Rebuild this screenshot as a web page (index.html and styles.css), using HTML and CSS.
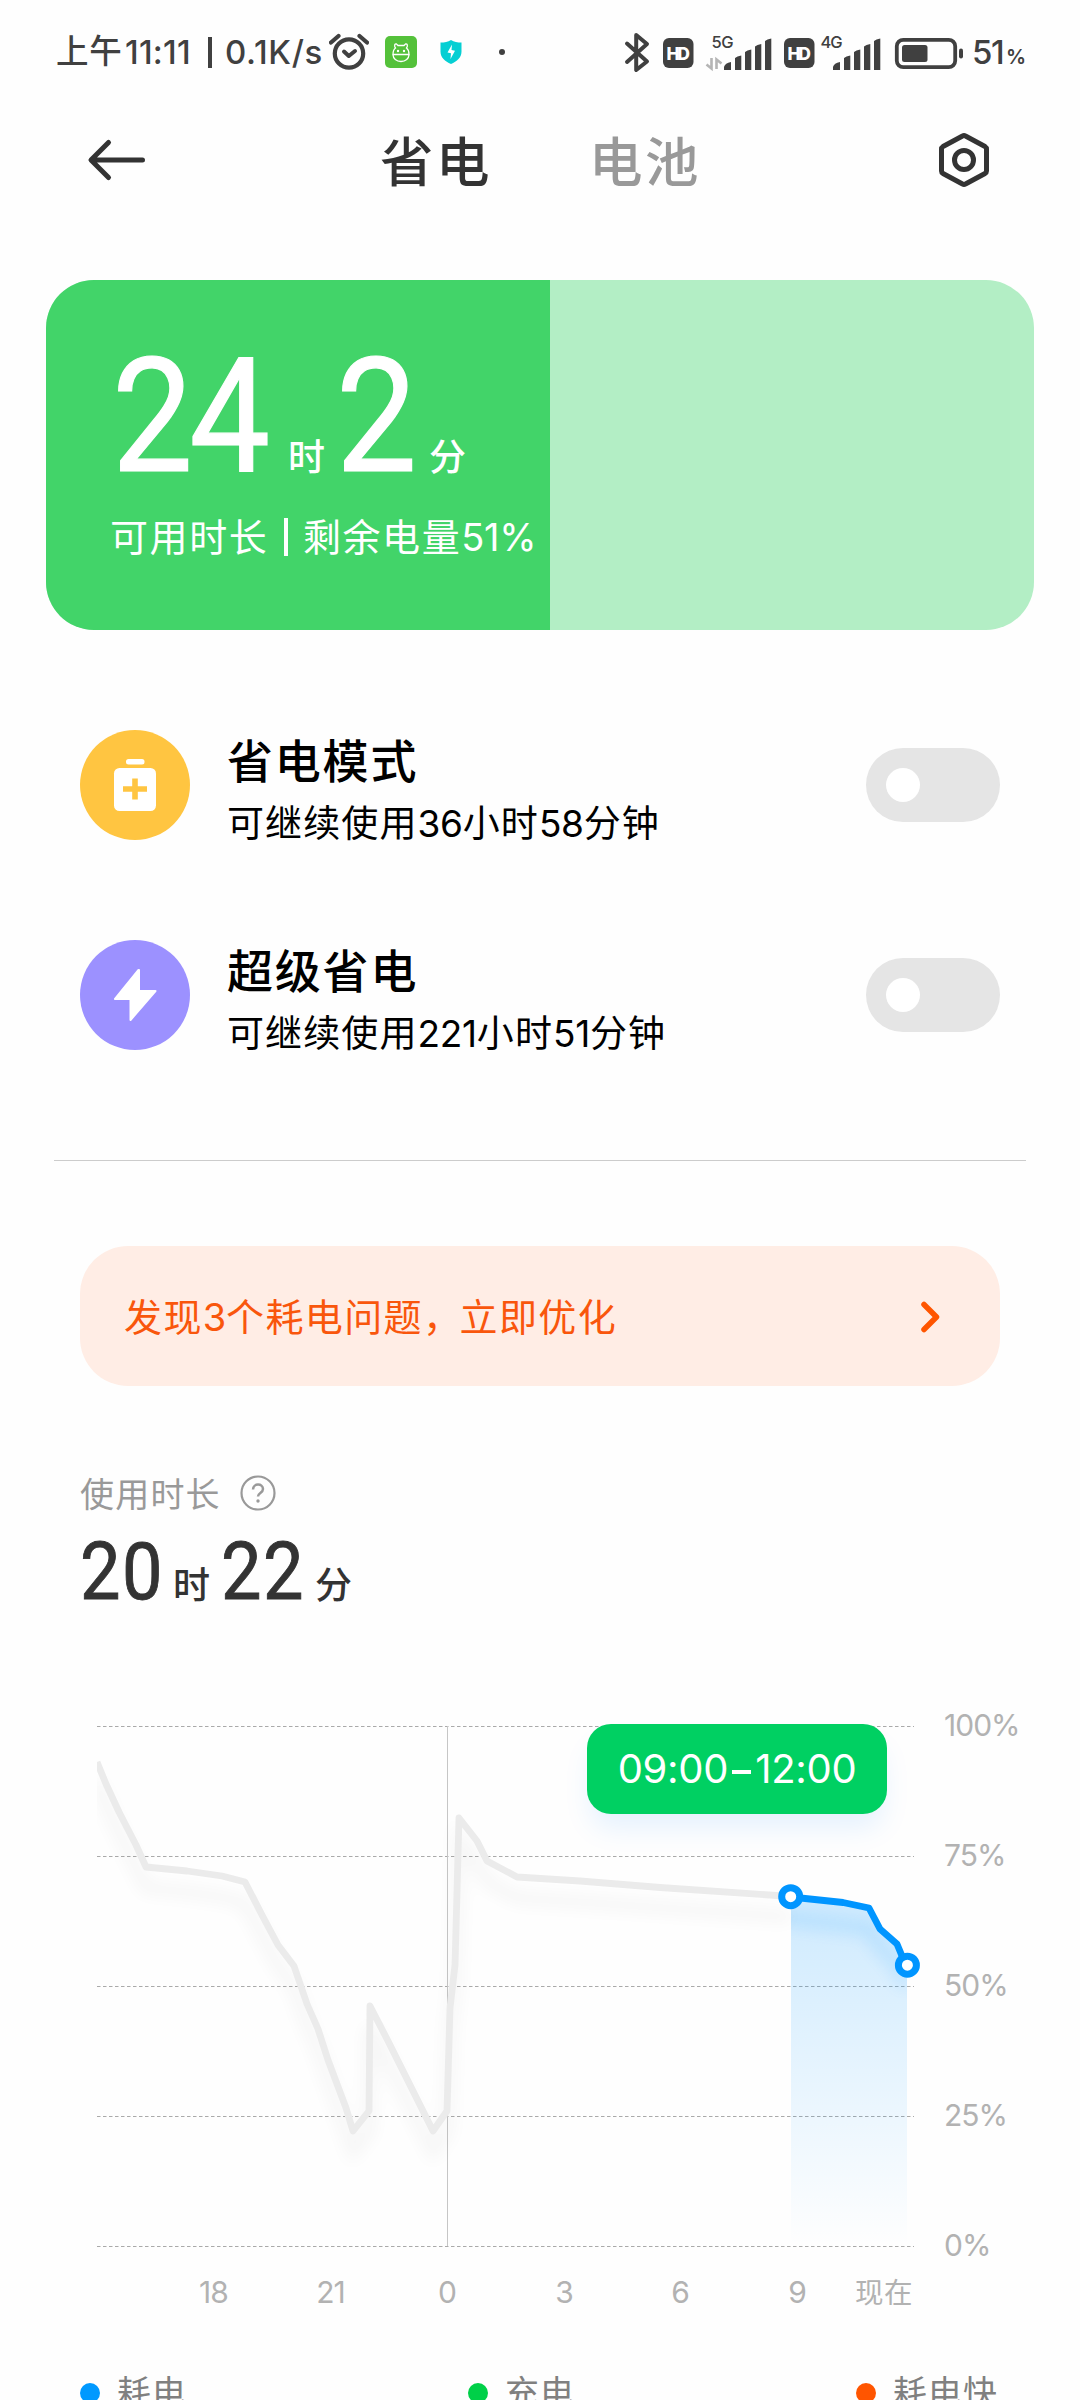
FILE: index.html
```html
<!DOCTYPE html>
<html lang="zh-CN">
<head>
<meta charset="utf-8">
<title>省电</title>
<link rel="stylesheet" href="styles.css">
</head>
<body>
<div class="status">
  <span class="s-ampm">上午</span><span class="s-clock">11:11</span><span class="s-bar"></span><span class="s-speed">0.1K/s</span>
  <svg class="s-alarm" width="40" height="40" viewBox="0 0 40 40" fill="none" stroke="#404040"><circle cx="20" cy="21.500" r="14.200" stroke-width="4.200"/><path d="M2 10.500 9.500 4M38 10.500 30.500 4" stroke-width="4.200" stroke-linecap="round"/><path d="M15 19.500 19.800 24 26 19" stroke-width="4" stroke-linecap="round" stroke-linejoin="round"/></svg>
  <svg class="s-app" width="32" height="32" viewBox="0 0 32 32"><rect width="32" height="32" rx="5" fill="#54c13a"/><g fill="none" stroke="#fff" stroke-width="1.300"><path d="M8 18.500C8 15 8.500 13.500 10.500 12 9 10 9.500 7.500 11.500 8L13 9.500h6L20.500 8c2-.5 2.500 2 1 4 2 1.500 2.500 3 2.500 6.500z"/><path d="M8 18.500c0 4 3.500 7 8 7s8-3 8-7"/></g><circle cx="13" cy="15" r="1.200" fill="#fff"/><circle cx="19" cy="15" r="1.200" fill="#fff"/></svg>
  <svg class="s-shield" width="24" height="26" viewBox="0 0 24 26"><path d="M12 1c3 2 6.500 2.500 10.500 2.500v9c0 6-4.500 10-10.500 12.500C6 22.500 1.500 18.500 1.500 12.500v-9C5.500 3.500 9 3 12 1z" fill="#06cfd3"/><path d="M13 5.500 8.500 13.500l3.500.8-.5 5.700 4.500-8.300-3.500-.7z" fill="#fff"/></svg>
  <span class="s-dot"></span>
  <svg class="s-right" width="342" height="44" viewBox="622 30 342 44">
    <path d="M628 43.500 648 61.500 637.200 70V35L648 44 628 62" fill="none" stroke="#404040" stroke-width="4" stroke-linecap="round" stroke-linejoin="round"/>
    <g fill="#404040"><rect x="664" y="38" width="30.500" height="30" rx="6"/><rect x="785" y="38" width="30.500" height="30" rx="6"/></g>
    <g class="hd"><text x="667.500" y="59.500" textLength="23.500">HD</text><text x="788.500" y="59.500" textLength="23.500">HD</text></g>
    <g class="net"><text x="712.500" y="48" textLength="22">5G</text><text x="821.500" y="48" textLength="22">4G</text></g>
    <g fill="none" stroke="#b5b5b5" stroke-width="2.600"><path d="M712.500 58v10.500l-5-4"/><path d="M717.500 69V59.500l5 4"/></g>
    <g fill="#404040" id="bars"><path d="M725 70v-3q1-4 7-5v8zM736 70V58q2-2 6.300-2.500V70zM746 70V52q2-2 6.300-2.500V70zM756 70V46.500q2-2 6.300-2.500V70zM766 70V41q2-2 6.300-2.500V70z"/></g>
    <use href="#bars" x="109"/>
    <rect x="897.800" y="39.800" width="58.400" height="27.400" rx="6.500" fill="none" stroke="#404040" stroke-width="3.800"/>
    <rect x="903" y="45" width="25.500" height="17" rx="2.500" fill="#404040"/><rect x="960" y="48.500" width="4" height="10" rx="2" fill="#404040"/>
  </svg>
  <span class="s-batt">51</span><span class="s-pct">%</span>
</div>

<header class="header">
  <svg class="back" width="60" height="44" viewBox="0 0 60 44" fill="none" stroke="#333" stroke-width="5" stroke-linecap="round" stroke-linejoin="round"><path d="M23.500 4.500 6 22 23.500 39.500M6.500 22H57.500"/></svg>
  <span class="tab on">省电</span><span class="tab">电池</span>
  <svg class="gear" width="52" height="56" viewBox="0 0 52 56" fill="none" stroke="#333" stroke-width="5" stroke-linejoin="round"><path d="M24.500 4 Q26 3 27.500 4L47 14.500Q48.500 15.500 48.500 17V39Q48.500 40.500 47 41.500L27.500 52Q26 53 24.500 52L5 41.500Q3.500 40.500 3.500 39V17Q3.500 15.500 5 14.500Z"/><circle cx="26" cy="28" r="9.500"/></svg>
</header>

<section class="card">
  <div class="card-fill" style="width:51%">
    <div class="time big"><span class="n n1">24</span><span class="u">时</span><span class="n n2">2</span><span class="u">分</span></div>
    <div class="card-sub">可用时长<i class="sep"></i>剩余电量<span class="num">51%</span></div>
  </div>
</section>

<section class="modes">
  <div class="mode">
    <svg width="110" height="110" viewBox="0 0 110 110"><circle cx="55" cy="55" r="55" fill="#ffc541"/><rect x="46" y="29" width="18.500" height="5.500" rx="2.500" fill="#fff"/><rect x="34" y="38" width="42" height="43" rx="5.500" fill="#fff"/><path d="M43 59h24M55 48.500v21" stroke="#ffc541" stroke-width="5.600"/></svg>
    <div class="mode-text"><h2>省电模式</h2><p>可继续使用<span class="num">36</span>小时<span class="num">58</span>分钟</p></div>
    <span class="toggle"><i></i></span>
  </div>
  <div class="mode">
    <svg width="110" height="110" viewBox="0 0 110 110"><circle cx="55" cy="55" r="55" fill="#9c91ff"/><path d="M58.500 30 35 59h15.500v21L75.500 51H59V30z" fill="#fff" stroke="#fff" stroke-width="2" stroke-linejoin="round"/></svg>
    <div class="mode-text"><h2>超级省电</h2><p>可继续使用<span class="num">221</span>小时<span class="num">51</span>分钟</p></div>
    <span class="toggle"><i></i></span>
  </div>
</section>

<section class="banner"><span>发现<span class="num">3</span>个耗电问题<span class="comma">，</span>立即优化</span>
  <svg width="24" height="34" viewBox="0 0 24 34" fill="none" stroke="#ff5500" stroke-width="5.500" stroke-linecap="round" stroke-linejoin="round"><path d="M6 4.500 18.500 17 6 29.500"/></svg>
</section>

<section class="usage">
  <div class="usage-label">使用时长
    <svg width="36" height="36" viewBox="0 0 36 36"><circle cx="18" cy="18" r="16.500" fill="none" stroke="#999" stroke-width="2.200"/><path d="M13 14.500c0-6.500 10-6.500 10-.5 0 4-5 4-5 7.500" fill="none" stroke="#999" stroke-width="2.500"/><circle cx="18" cy="26" r="1.700" fill="#999"/></svg>
  </div>
  <div class="time small"><span class="n n1">20</span><span class="u">时</span><span class="n n2">22</span><span class="u">分</span></div>
</section>

<section class="chart">
  <svg width="1000" height="640" viewBox="80 1690 1000 640">
    <defs>
      <linearGradient id="area" x1="0" y1="1897" x2="0" y2="2246" gradientUnits="userSpaceOnUse"><stop offset="0" stop-color="#0095ff" stop-opacity=".19"/><stop offset="1" stop-color="#0095ff" stop-opacity="0"/></linearGradient>
      <filter id="soft" x="0" y="1690" width="1080" height="600" filterUnits="userSpaceOnUse"><feGaussianBlur stdDeviation="8"/></filter>
      <clipPath id="plot"><rect x="97" y="1700" width="840" height="560"/></clipPath>
      <clipPath id="sel"><path d="M791 1897 869 1908 880 1929 897 1944 907 1965V2246H791Z"/></clipPath>
    </defs>
    <path class="grid" d="M97 1726.500H914M97 1856.500H914M97 1986.500H914M97 2116.500H914M97 2246.500H914"/>
    <path d="M447.500 1726V2246" stroke="#c6c6c6"/>
    <path d="M791 1897 843 1902.500 869 1908 880 1929 897 1944 902 1956 907 1965V2246H791Z" fill="url(#area)"/>
    <g clip-path="url(#plot)">
      <path transform="translate(0 21)" filter="url(#soft)" opacity=".032" fill="none" stroke="#000" stroke-width="13" d="M96 1760 106 1784 119 1812 146 1867 187 1871 222 1876 245 1882 278 1945 294 1966 307 2004 318 2029 353 2131 369 2111 370 2006 411 2087 433 2131 447 2111 450 2008 455 1965 459 1818 477 1841 487 1861 517 1877 580 1881 791 1896"/>
      <path fill="none" stroke="#ebebeb" stroke-width="6.800" stroke-linejoin="round" d="M97 1762 106 1784 119 1812 136 1845 146 1867 187 1871 222 1876 245 1882 262 1915 278 1945 294 1966 307 2004 318 2029 328 2060 346 2108 353 2131 369 2111 370 2006 388 2041 411 2087 433 2131 447 2111 450 2008 455 1965 459 1818 477 1841 487 1861 517 1877 580 1881 660 1887.500 791 1896.500"/>
    </g>
    <path clip-path="url(#sel)" filter="url(#soft)" opacity=".13" fill="none" stroke="#0095ff" stroke-width="14" d="M780 1917 869 1928 880 1946 897 1964 907 1985"/>
    <path fill="none" stroke="#0095ff" stroke-width="6.800" stroke-linejoin="round" d="M791 1897 843 1902.500 869 1908 880 1929 897 1944 902 1956 907.500 1965"/>
    <g fill="#fff" stroke="#0095ff" stroke-width="7"><circle cx="790.700" cy="1896.700" r="9"/><circle cx="907.400" cy="1965.200" r="9"/></g>
    <g class="axis"><text x="944" y="1736">100%</text><text x="944" y="1866">75%</text><text x="944" y="1996">50%</text><text x="944" y="2126">25%</text><text x="944" y="2256">0%</text></g>
    <g class="axis mid"><text x="213.500" y="2303">18</text><text x="330.500" y="2303">21</text><text x="447" y="2303">0</text><text x="564" y="2303">3</text><text x="680" y="2303">6</text><text x="797" y="2303">9</text><text x="884" y="2303" class="now">现在</text></g>
  </svg>
  <div class="tip">09:00<i></i>12:00</div>
</section>

<footer class="legend">
  <span class="key"><i class="blue"></i>耗电</span><span class="key"><i class="green"></i>充电</span><span class="key"><i class="orange"></i>耗电快</span>
</footer>
</body>
</html>
```
FILE: styles.css
```css
* { box-sizing: border-box; margin: 0; padding: 0; }
html { height: 2400px; overflow: hidden; }
body {
  width: 1080px; height: 2400px; overflow: hidden; background: #fefefe; color: #000;
  font-family: Inter, "Noto Sans CJK SC", sans-serif;
  display: flex; flex-direction: column;
}
svg { display: block; flex: none; }
.num { letter-spacing: -.3px; }

.status { height: 104px; flex: none; display: flex; align-items: center; padding-left: 56px; color: #404040; font-size: 33px; font-weight: 500; line-height: 40px; white-space: nowrap; }
.s-ampm { width: 69px; font-size: 32.500px; letter-spacing: .8px; }
.s-clock { width: 83px; letter-spacing: .2px; }
.s-bar { width: 3.500px; height: 31px; background: #404040; margin-right: 13.500px; }
.s-speed { width: 104px; letter-spacing: .7px; }
.s-alarm { margin-right: 16px; }
.s-app { margin-right: 22px; }
.s-shield { margin-right: 36px; }
.s-dot { width: 6px; height: 6px; border-radius: 50%; background: #404040; margin-right: 116px; }
.s-right { margin-right: 9px; }
.s-batt { width: 34px; letter-spacing: -1.5px; }
.s-pct { font-size: 20px; font-weight: 600; padding-top: 9px; }
.hd { font: 800 17.500px Inter, sans-serif; fill: #fff; }
.net { font: 500 16.500px Inter, sans-serif; fill: #404040; }

.header { height: 112px; flex: none; display: flex; align-items: center; padding: 0 90px 0 85px; }
.tab { font-size: 53.500px; line-height: 60px; font-weight: 500; letter-spacing: 2.500px; color: #999; padding-top: 6px; width: 112px; white-space: nowrap; }
.tab.on { color: #333; margin-left: 235px; margin-right: 97px; }
.gear { margin-left: auto; }

.card { flex: none; height: 350px; margin: 64px 46px 0; border-radius: 48px; overflow: hidden; background: #b3eec5; }
.card-fill { height: 100%; background: #42d469; color: #fff; padding: 57px 0 0 66px; white-space: nowrap; }
.time { display: flex; align-items: baseline; }
.n { display: block; flex: none; font-family: Roboto, sans-serif; transform: scaleX(.9); transform-origin: left; }
.u { font-size: 37px; font-weight: 500; flex: none; width: 37px; }
.big .n { font-size: 160px; line-height: 160px; letter-spacing: -4px; -webkit-text-stroke: 1.200px currentColor; }
.big .n1 { width: 176px; }
.big .n2 { width: 93px; margin-left: 11px; }
.card-sub { font-size: 38px; line-height: 50px; margin: 15px 0 0 -2px; letter-spacing: 1.600px; display: flex; align-items: center; }
.sep { width: 3.500px; height: 38px; background: currentColor; margin: 0 15px 0 16px; }

.modes { flex: none; height: 531px; margin: 0 54px; padding: 100px 26px 0; border-bottom: 1px solid #ccc; display: flex; flex-direction: column; gap: 100px; }
.mode { display: flex; align-items: center; height: 110px; }
.mode-text { margin-left: 37px; padding-top: 10px; white-space: nowrap; }
.mode h2 { font-size: 46px; line-height: 60px; font-weight: 500; letter-spacing: 1.800px; }
.mode p { font-size: 37px; line-height: 50px; margin-top: 8px; letter-spacing: 1.100px; }
.mode .num { letter-spacing: -.3px; }
.toggle { margin-left: auto; width: 134px; height: 74px; border-radius: 37px; background: #e5e5e5; display: flex; align-items: center; padding-left: 20px; }
.toggle i { width: 34px; height: 34px; border-radius: 50%; background: #fff; }

.banner { flex: none; height: 140px; margin: 85px 80px 0; border-radius: 48px; background: #ffede5; color: #f9560c; display: flex; align-items: center; justify-content: space-between; padding: 2px 58px 0 44px; font-size: 38px; letter-spacing: 1.400px; white-space: nowrap; line-height: 50px; }
.comma { letter-spacing: -1.500px; }

.usage { flex: none; height: 304px; padding: 87px 80px 0; color: #333; }
.usage-label { display: flex; align-items: center; font-size: 34px; line-height: 44px; letter-spacing: 1.200px; color: #999; gap: 19px; }
.usage-label svg { margin-top: -4px; }
.small { margin-top: 15px; }
.small .n { font-size: 80px; line-height: 80px; letter-spacing: 1.800px; -webkit-text-stroke: .9px currentColor; }
.small .n1 { width: 93px; }
.small .n2 { width: 94px; margin-left: 11px; }

.chart { flex: none; height: 640px; position: relative; margin-left: 80px; }
.grid { stroke: #aaa; stroke-dasharray: 3.500 2.500; }
.axis { font: 400 30px Inter, "Noto Sans CJK SC", sans-serif; fill: #b2b2b2; letter-spacing: -1px; }
.mid { text-anchor: middle; }
.now { font-size: 28.500px; letter-spacing: .5px; }
.tip { position: absolute; left: 507px; top: 34px; width: 300px; height: 90px; border-radius: 24px; background: #00d062; color: #fff; box-shadow: 0 18px 28px -4px rgba(0,125,255,.1); display: flex; align-items: center; justify-content: center; font-size: 40px; letter-spacing: -.3px; line-height: 50px; }
.tip i { width: 19px; height: 4px; background: #fff; margin: 5px 4px 0; }

.legend { flex: none; display: flex; padding: 41px 80px 0; height: 70px; }
.key { width: 388px; flex: none; height: 44px; display: flex; align-items: center; gap: 17px; font-size: 34px; line-height: 44px; letter-spacing: 1px; color: #808080; white-space: nowrap; }
.key:last-child { width: auto; }
.key i { width: 20px; height: 20px; border-radius: 50%; }
.blue { background: #09f; }
.green { background: #00d048; }
.orange { background: #f50; }
```
